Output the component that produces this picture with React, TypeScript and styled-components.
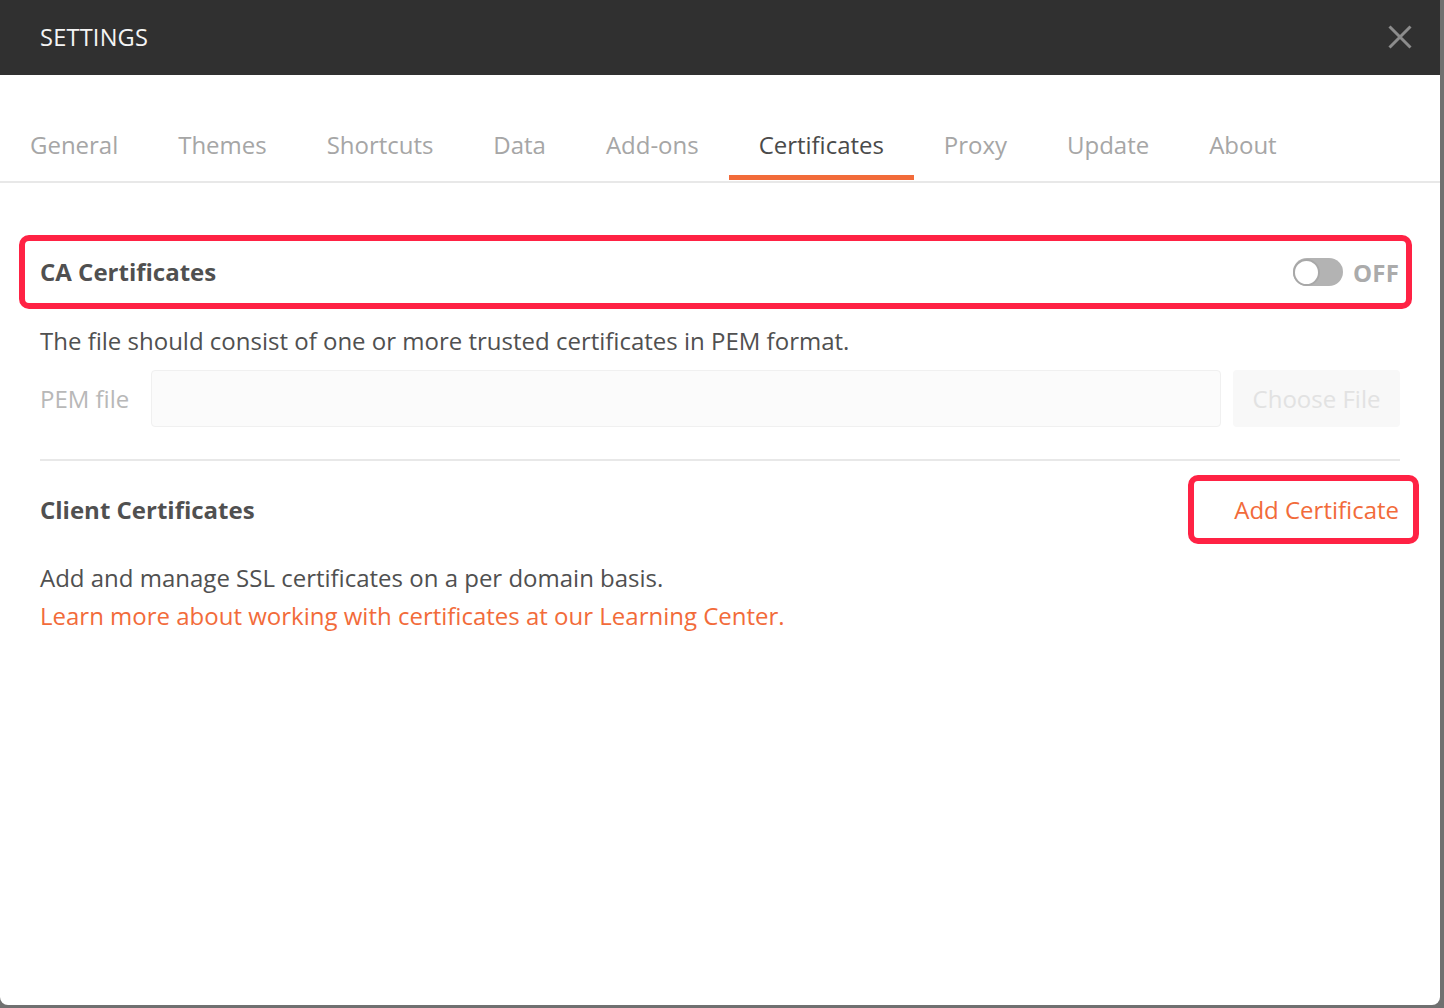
import React from "react";
import styled, { createGlobalStyle } from "styled-components";

const ORANGE = "#f26b3a";
const RED = "#ff2244";
const TEXT = "#505050";

const Global = createGlobalStyle`
  html, body { margin: 0; padding: 0; }
  body {
    background: #707070;
    font-family: "Open Sans", "Noto Sans", sans-serif;
    width: 1444px;
    height: 1008px;
    overflow: hidden;
  }
`;

const Modal = styled.div`
  width: 1440px;
  height: 1005px;
  background: #ffffff;
  border-radius: 0 0 8px 8px;
  display: flex;
  flex-direction: column;
  overflow: hidden;
`;

const Header = styled.header`
  height: 75px;
  background: #303030;
  display: flex;
  align-items: center;
  justify-content: space-between;
  padding: 0 28px 2px 40px;
  box-sizing: border-box;
  flex-shrink: 0;
`;

const Title = styled.h1`
  margin: 0;
  font-size: 23.6px;
  font-weight: 400;
  color: #f4f4f4;
  letter-spacing: 0.2px;
`;

const CloseButton = styled.button`
  width: 24px;
  height: 24px;
  padding: 0;
  border: 0;
  background: transparent;
  display: flex;
  align-items: center;
  justify-content: center;
  cursor: pointer;
`;

const TabBar = styled.nav`
  display: flex;
  margin-top: 36px;
  padding-left: 0;
  border-bottom: 2px solid #e8e8e8;
`;

const Tab = styled.div<{ $active?: boolean }>`
  padding: 17px 30px 13px;
  font-size: 24px;
  line-height: 34px;
  letter-spacing: -0.02px;
  color: ${(p) => (p.$active ? "#4a4a4a" : "#a6a6a6")};
  border-bottom: 5px solid ${(p) => (p.$active ? ORANGE : "transparent")};
  margin-bottom: 1px;
`;

const Content = styled.section`
  padding: 0 40px;
  display: flex;
  flex-direction: column;
`;

const Highlight = styled.div<{ $ml: number; $mr: number; $pl: number; $pr: number }>`
  border: 6px solid ${RED};
  border-radius: 10px;
  margin-left: ${(p) => -p.$ml}px;
  margin-right: ${(p) => -p.$mr}px;
  padding-left: ${(p) => p.$pl}px;
  padding-right: ${(p) => p.$pr}px;
  display: flex;
  align-items: center;
  justify-content: space-between;
`;

const CaHighlight = styled(Highlight)`
  margin-top: 52px;
  height: 62px;
`;

const SectionTitle = styled.h2`
  margin: 0;
  font-size: 24px;
  font-weight: 700;
  color: ${TEXT};
  line-height: 34px;
`;

const ToggleWrap = styled.div`
  display: flex;
  align-items: center;
  gap: 10px;
`;

const Track = styled.div`
  width: 50px;
  height: 28px;
  border-radius: 14px;
  background: #b3b3b3;
  display: flex;
  align-items: center;
  box-sizing: border-box;
`;

const Knob = styled.div`
  width: 27px;
  height: 27px;
  border-radius: 50%;
  background: #ffffff;
  border: 2px solid #a8a8a8;
  box-sizing: border-box;
`;

const ToggleLabel = styled.span`
  font-size: 24px;
  font-weight: 700;
  color: #ababab;
  letter-spacing: 0.2px;
`;

const Paragraph = styled.p<{ $orange?: boolean }>`
  margin: 0;
  font-size: 24px;
  line-height: 38px;
  color: ${(p) => (p.$orange ? ORANGE : TEXT)};
`;

const Description = styled(Paragraph)`
  margin-top: 13px;
`;

const PemRow = styled.div`
  display: flex;
  align-items: center;
  margin-top: 10px;
  height: 57px;
`;

const PemLabel = styled.label`
  font-size: 24px;
  color: #b8b8b8;
  width: 111px;
  flex-shrink: 0;
`;

const PemInput = styled.div`
  flex: 1;
  height: 100%;
  box-sizing: border-box;
  background: #fbfbfb;
  border: 1px solid #f0f0f0;
  border-radius: 4px;
`;

const ChooseButton = styled.button`
  margin-left: 12px;
  width: 167px;
  height: 100%;
  border: 0;
  border-radius: 4px;
  background: #f8f8f8;
  color: #e2e2e2;
  font-family: inherit;
  font-size: 24px;
`;

const Divider = styled.hr`
  margin: 32px 0 0;
  border: 0;
  border-top: 2px solid #e8e8e8;
`;

const ClientRow = styled.div`
  display: flex;
  align-items: center;
  justify-content: space-between;
  margin-top: 14px;
  height: 69px;
`;

const AddHighlight = styled(Highlight)`
  height: 69px;
  box-sizing: border-box;
`;

const LinkText = styled.span`
  font-size: 24px;
  color: ${ORANGE};
`;

const ClientBody = styled.div`
  margin-top: 15px;
`;

const tabs = [
  "General",
  "Themes",
  "Shortcuts",
  "Data",
  "Add-ons",
  "Certificates",
  "Proxy",
  "Update",
  "About",
];

export default function App() {
  return (
    <>
      <Global />
      <Modal>
        <Header>
          <Title>SETTINGS</Title>
          <CloseButton aria-label="Close">
            <svg width="24" height="24" viewBox="0 0 24 24">
              <path
                d="M1.5 1.5 L22.5 22.5 M22.5 1.5 L1.5 22.5"
                stroke="#8c8c8c"
                strokeWidth="3"
                strokeLinecap="butt"
              />
            </svg>
          </CloseButton>
        </Header>
        <TabBar>
          {tabs.map((t) => (
            <Tab key={t} $active={t === "Certificates"}>
              {t}
            </Tab>
          ))}
        </TabBar>
        <Content>
          <CaHighlight $ml={21} $mr={12} $pl={15} $pr={7}>
            <SectionTitle>CA Certificates</SectionTitle>
            <ToggleWrap>
              <Track>
                <Knob />
              </Track>
              <ToggleLabel>OFF</ToggleLabel>
            </ToggleWrap>
          </CaHighlight>
          <Description>
            The file should consist of one or more trusted certificates in PEM format.
          </Description>
          <PemRow>
            <PemLabel>PEM file</PemLabel>
            <PemInput />
            <ChooseButton>Choose File</ChooseButton>
          </PemRow>
          <Divider />
          <ClientRow>
            <SectionTitle>Client Certificates</SectionTitle>
            <AddHighlight $ml={0} $mr={19} $pl={40} $pr={14}>
              <LinkText>Add Certificate</LinkText>
            </AddHighlight>
          </ClientRow>
          <ClientBody>
            <Paragraph>Add and manage SSL certificates on a per domain basis.</Paragraph>
            <Paragraph $orange>
              Learn more about working with certificates at our Learning Center.
            </Paragraph>
          </ClientBody>
        </Content>
      </Modal>
    </>
  );
}
